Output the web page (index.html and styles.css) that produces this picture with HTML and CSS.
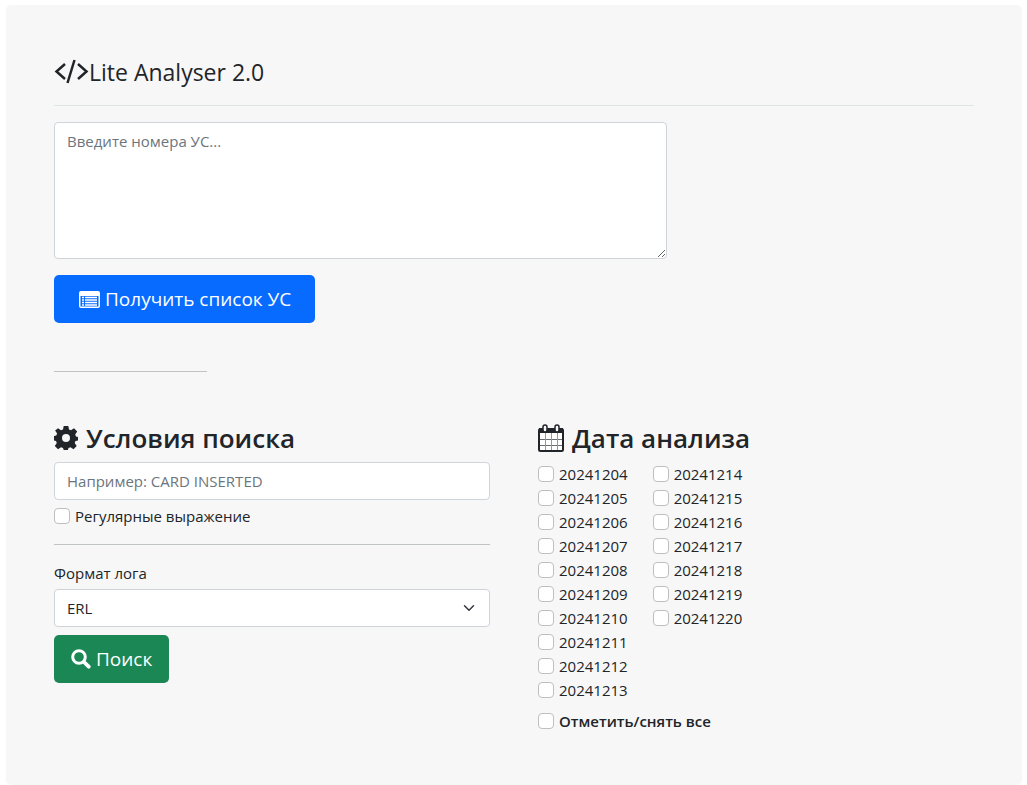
FILE: index.html
```html
<!DOCTYPE html>
<html lang="ru">
<head>
<meta charset="utf-8">
<meta name="viewport" content="width=device-width, initial-scale=1">
<title>Lite Analyser 2.0</title>
<link rel="stylesheet" href="styles.css">
</head>
<body>
<main class="panel">
  <header class="header">
    <svg class="icon-code" viewBox="0 0 35 26" fill="none" stroke="currentColor" stroke-width="2.500" aria-hidden="true"><path d="M11 5 2.500 12.500 11 20M24 5l8.500 7.500L24 20M20.500 1 13.500 24"/></svg>
    <h1 class="title">Lite Analyser 2.0</h1>
  </header>

  <form class="list-form">
    <textarea class="control numbers" placeholder="Введите номера УС..." aria-label="Номера УС"></textarea>
    <button class="button button-primary" type="button">
      <svg class="icon-list" viewBox="0 0 21 17" aria-hidden="true"><path fill="currentColor" fill-rule="evenodd" d="M2 0h17a2 2 0 0 1 2 2v13a2 2 0 0 1-2 2H2a2 2 0 0 1-2-2V2a2 2 0 0 1 2-2zM1.500 5v10q0 .5.5.5h17q.5 0 .5-.5V5z"/><path stroke="currentColor" stroke-width="1.400" d="M3 6.500h2M3 9h2M3 11.500h2M3 14h2M6 6.500h12M6 9h12M6 11.500h12M6 14h12"/></svg>
      <span>Получить список УС</span>
    </button>
  </form>

  <hr class="rule rule-short">

  <form class="columns">
    <section class="conditions">
      <h2 class="heading">
        <svg class="icon-gear" viewBox="0 0 24 24" aria-hidden="true"><path fill="currentColor" fill-rule="evenodd" d="M9.700 0h4.600l.7 3.500 2 .8 3-2 3.200 3.300-2 2.900.8 2 2 .5v3.500l-2.500.5-.8 2 2 3-3.200 3.200-3-2-2 .8-.6 2H9.700l-.7-2-2-.8-3 2L.8 20l2-3-.8-2-2-.5V10l2.300-.5.8-2-2-2.900L4 2.300l3 2 2-.8zM12 8a4 4 0 1 0 0 8 4 4 0 0 0 0-8z"/></svg>
        <span>Условия поиска</span>
      </h2>
      <input class="control" type="text" placeholder="Например: CARD INSERTED" aria-label="Условия поиска">
      <label class="check check-regex"><input class="box" type="checkbox"><span>Регулярные выражение</span></label>
      <hr class="rule">
      <label class="field-label" for="format">Формат лога</label>
      <select class="control select" id="format"><option>ERL</option></select>
      <button class="button button-success" type="button">
        <svg class="icon-search" viewBox="0 0 20 20" fill="none" stroke="currentColor" aria-hidden="true"><circle cx="8" cy="8" r="6.300" stroke-width="3"/><path stroke-width="3.800" stroke-linecap="round" d="m13 13 4.700 4.700"/></svg>
        <span>Поиск</span>
      </button>
    </section>

    <section class="dates">
      <h2 class="heading">
        <svg class="icon-calendar" viewBox="0 0 26 28" aria-hidden="true"><rect x="1" y="5" width="24" height="22" rx="1.500" fill="#fff" stroke="#212529" stroke-width="2"/><path fill="#212529" d="M1 4h24v5H1z"/><path fill="none" stroke="#6b6d70" d="M2 15.500h22M2 21.500h22"/><path fill="none" stroke="#b98e68" d="M7.500 9v17M13.500 9v17M19.500 9v17"/><rect x="5" y="1" width="4" height="7" rx="2" fill="#f7f7f7" stroke="#212529" stroke-width="1.500"/><rect x="17" y="1" width="4" height="7" rx="2" fill="#f7f7f7" stroke="#212529" stroke-width="1.500"/></svg>
        <span>Дата анализа</span>
      </h2>
      <div class="date-columns">
        <div class="date-list">
          <label class="check"><input class="box" type="checkbox"><span>20241204</span></label>
          <label class="check"><input class="box" type="checkbox"><span>20241205</span></label>
          <label class="check"><input class="box" type="checkbox"><span>20241206</span></label>
          <label class="check"><input class="box" type="checkbox"><span>20241207</span></label>
          <label class="check"><input class="box" type="checkbox"><span>20241208</span></label>
          <label class="check"><input class="box" type="checkbox"><span>20241209</span></label>
          <label class="check"><input class="box" type="checkbox"><span>20241210</span></label>
          <label class="check"><input class="box" type="checkbox"><span>20241211</span></label>
          <label class="check"><input class="box" type="checkbox"><span>20241212</span></label>
          <label class="check"><input class="box" type="checkbox"><span>20241213</span></label>
        </div>
        <div class="date-list">
          <label class="check"><input class="box" type="checkbox"><span>20241214</span></label>
          <label class="check"><input class="box" type="checkbox"><span>20241215</span></label>
          <label class="check"><input class="box" type="checkbox"><span>20241216</span></label>
          <label class="check"><input class="box" type="checkbox"><span>20241217</span></label>
          <label class="check"><input class="box" type="checkbox"><span>20241218</span></label>
          <label class="check"><input class="box" type="checkbox"><span>20241219</span></label>
          <label class="check"><input class="box" type="checkbox"><span>20241220</span></label>
        </div>
      </div>
      <label class="check check-all"><input class="box" type="checkbox"><span>Отметить/снять все</span></label>
    </section>
  </form>
</main>
</body>
</html>
```
FILE: styles.css
```css
* { box-sizing: border-box; }

body {
  margin: 0;
  padding: 5px 5px 0 6px;
  background: #fff;
  color: #212529;
  font: 15px/24px "Open Sans", "Noto Sans", sans-serif;
}

.panel {
  padding: 49px 48px 52px;
  border-radius: 5px;
  background: #f7f7f7;
}

.header {
  display: flex;
  align-items: center;
  padding-bottom: 15px;
  margin-bottom: 16px;
  border-bottom: 1px solid #dee5e6;
}

.title { margin: 0; font-size: 23px; font-weight: 400; line-height: 36px; }

.icon-code { width: 35px; height: 26px; }

.list-form {
  display: flex;
  flex-direction: column;
  align-items: flex-start;
  gap: 16px;
}

.control {
  display: block;
  width: 100%;
  height: 38px;
  padding: 6px 12px;
  border: 1px solid #ced4da;
  border-radius: 4px;
  background: #fff;
  color: #212529;
  font: inherit;
}

.control::placeholder { color: #6c757d; opacity: 1; }

.numbers { width: 66.6667%; height: 137px; resize: both; }

.select {
  appearance: none;
  background: #fff url("data:image/svg+xml,%3Csvg xmlns='http://www.w3.org/2000/svg' viewBox='0 0 16 16'%3E%3Cpath fill='none' stroke='%23343a40' stroke-linecap='round' stroke-linejoin='round' stroke-width='2' d='m2 5 6 6 6-6'/%3E%3C/svg%3E") no-repeat right 14px center / 12px 12px;
}

.button {
  display: inline-flex;
  align-items: center;
  gap: 5px;
  height: 48px;
  padding: 0 17px;
  border: 0;
  border-radius: 5px;
  color: #fff;
  font: inherit;
  font-size: 19px;
}

.button-primary { padding: 0 24px 0 25px; background: #086bff; }
.button-success { margin-top: 8px; background: #1a8754; }

.icon-list { width: 21px; height: 17px; }
.icon-search { width: 20px; height: 20px; }

.rule {
  height: 1px;
  margin: 16px 0;
  border: 0;
  background: #bfc3c4;
}

.rule-short { width: 16.6667%; margin: 48px 0; }

.columns { display: grid; grid-template-columns: 1fr 1fr; gap: 48px; }

.heading {
  display: flex;
  align-items: center;
  gap: 8px;
  margin: 0 0 6px;
  font-size: 26px;
  font-weight: 600;
  line-height: 36px;
}

.icon-gear { width: 24px; height: 24px; }
.icon-calendar { width: 26px; height: 28px; }

.check { display: flex; align-items: center; gap: 5px; }

.check-regex { margin-top: 4px; }

.box {
  appearance: none;
  flex: none;
  width: 16px;
  height: 16px;
  margin: 0;
  border: 1px solid #bfbfbf;
  border-radius: 4px;
  background: #fff;
}

.box:checked { background: #086bff; }

.field-label { display: block; margin-bottom: 4px; }

.date-columns { display: flex; gap: 25px; }

.check-all { margin-top: 7px; font-weight: 600; }
```
